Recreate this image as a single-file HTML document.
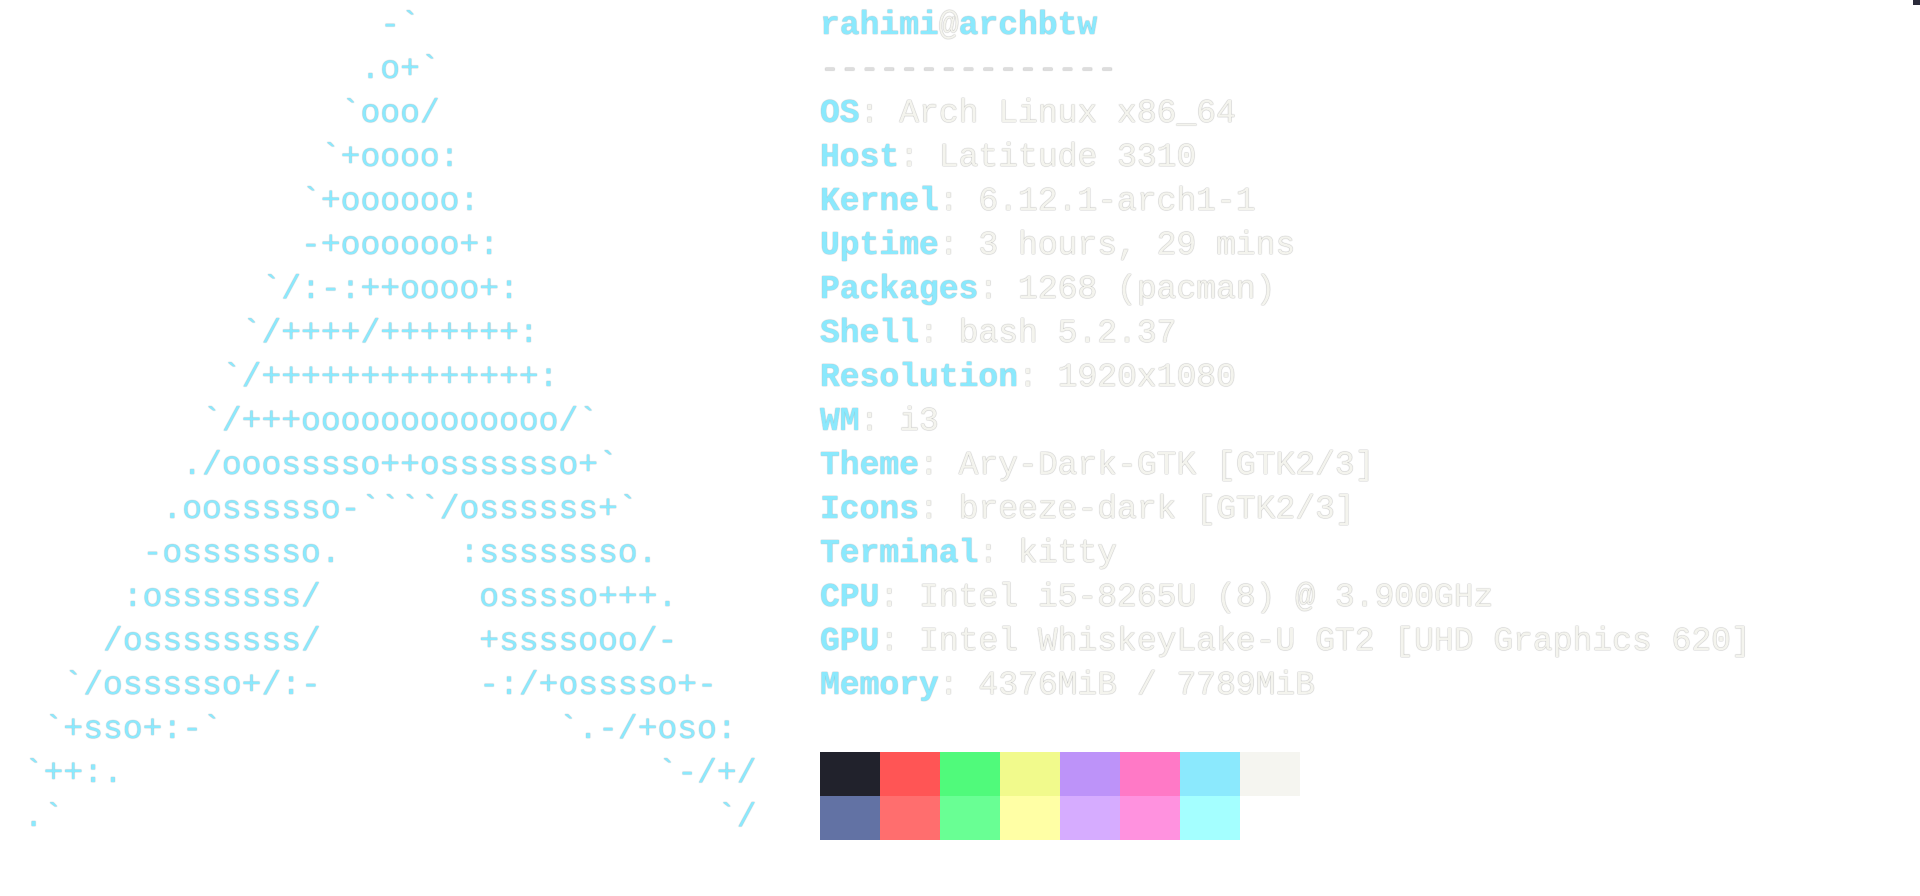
<!DOCTYPE html>
<html><head><meta charset="utf-8"><style>
html,body{margin:0;padding:0;background:#fff;width:1920px;height:896px;overflow:hidden}
pre{margin:0;position:absolute;font-family:"Liberation Mono",monospace;font-size:33px;line-height:44px;white-space:pre}
#art{left:4px;top:4px;color:#8be9fd;text-shadow:0 0 1px rgba(20,60,80,.6)}
#info{left:820px;top:4px;color:#f4f4ee;text-shadow:0 0 1px rgba(0,0,0,.55)}
#info b{color:#8be9fd;text-shadow:0 0 1px rgba(20,60,80,.6)}
.d{color:#ddd}
.pal{position:absolute;left:820px;display:flex}
.pal div{width:60px;height:44px}
#corner{position:absolute;right:0;top:0;width:7px;height:5px;background:#2a2a3a}
</style></head><body>
<pre id="art">                   -&#96;
                  .o+&#96;
                 &#96;ooo/
                &#96;+oooo:
               &#96;+oooooo:
               -+oooooo+:
             &#96;/:-:++oooo+:
            &#96;/++++/+++++++:
           &#96;/++++++++++++++:
          &#96;/+++ooooooooooooo/&#96;
         ./ooosssso++osssssso+&#96;
        .oossssso-&#96;&#96;&#96;&#96;/ossssss+&#96;
       -osssssso.      :ssssssso.
      :osssssss/        osssso+++.
     /ossssssss/        +ssssooo/-
   &#96;/ossssso+/:-        -:/+osssso+-
  &#96;+sso+:-&#96;                 &#96;.-/+oso:
 &#96;++:.                           &#96;-/+/
 .&#96;                                 &#96;/</pre>
<pre id="info"><b>rahimi</b>@<b>archbtw</b>
<span class="d">---------------</span>
<b>OS</b>: Arch Linux x86_64
<b>Host</b>: Latitude 3310
<b>Kernel</b>: 6.12.1-arch1-1
<b>Uptime</b>: 3 hours, 29 mins
<b>Packages</b>: 1268 (pacman)
<b>Shell</b>: bash 5.2.37
<b>Resolution</b>: 1920x1080
<b>WM</b>: i3
<b>Theme</b>: Ary-Dark-GTK [GTK2/3]
<b>Icons</b>: breeze-dark [GTK2/3]
<b>Terminal</b>: kitty
<b>CPU</b>: Intel i5-8265U (8) @ 3.900GHz
<b>GPU</b>: Intel WhiskeyLake-U GT2 [UHD Graphics 620]
<b>Memory</b>: 4376MiB / 7789MiB</pre>
<div class="pal" style="top:752px"><div style="background:#21222c"></div><div style="background:#ff5555"></div><div style="background:#50fa7b"></div><div style="background:#f1fa8c"></div><div style="background:#bd93f9"></div><div style="background:#ff79c6"></div><div style="background:#8be9fd"></div><div style="background:#f5f5f0"></div></div>
<div class="pal" style="top:796px"><div style="background:#6272a4"></div><div style="background:#ff6e6e"></div><div style="background:#69ff94"></div><div style="background:#ffffa5"></div><div style="background:#d6acff"></div><div style="background:#ff92df"></div><div style="background:#a4ffff"></div></div>
<div id="corner"></div>
</body></html>
